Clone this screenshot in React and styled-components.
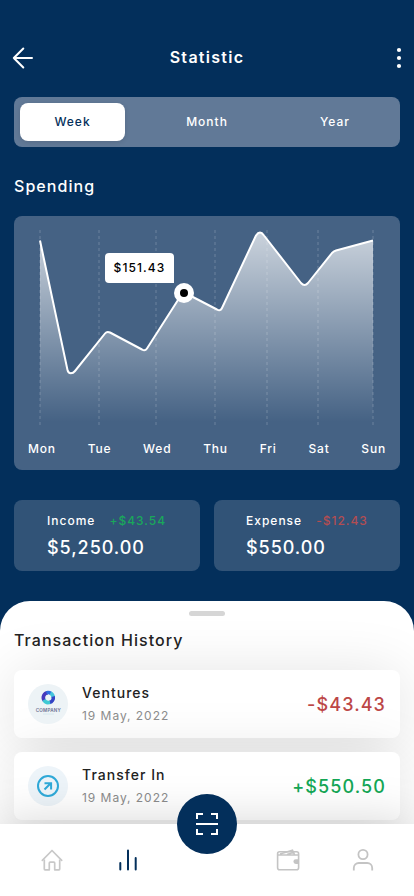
import React from "react";
import styled, { createGlobalStyle } from "styled-components";

const GlobalStyle = createGlobalStyle`
  * {
    box-sizing: border-box;
  }

  body {
    margin: 0;
    background: #032f5b;
    font-family: Inter, "Liberation Sans", sans-serif;
  }
`;

const Screen = styled.div`
  display: flex;
  flex-direction: column;
  width: 414px;
  height: 896px;
  overflow: hidden;
  background: #032f5b;
  color: #fff;
`;

const Header = styled.header`
  display: flex;
  align-items: center;
  justify-content: space-between;
  height: 97px;
  padding: 19px 12px 0;
`;

const HeaderTitle = styled.h1`
  margin: 0 0 2px;
  font-size: 16px;
  font-weight: 600;
  line-height: 20px;
  letter-spacing: 1.28px;
`;

const IconButton = styled.button`
  display: flex;
  justify-content: ${({ $end }) => ($end ? "flex-end" : "flex-start")};
  width: 24px;
  padding: 0;
  border: none;
  background: none;
`;

const Segments = styled.div`
  display: grid;
  grid-template-columns: 105px 164px 92px;
  flex-shrink: 0;
  height: 50px;
  margin: 0 14px;
  padding: 6px;
  border-radius: 8px;
  background: #617997;
`;

const Segment = styled.button`
  padding: 0 0 2px;
  border: none;
  border-radius: 8px;
  background: ${({ $active }) => ($active ? "#fff" : "transparent")};
  box-shadow: ${({ $active }) =>
    $active ? "0 1px 5px rgba(0, 0, 0, 0.12)" : "none"};
  color: ${({ $active }) => ($active ? "#032f5b" : "#fff")};
  font-family: inherit;
  font-size: 12px;
  font-weight: 500;
  letter-spacing: 1px;
`;

const SectionTitle = styled.h2`
  margin: ${({ $margin }) => $margin};
  color: ${({ $dark }) => ($dark ? "#222" : "#fff")};
  font-size: 16px;
  font-weight: 500;
  line-height: 20px;
  letter-spacing: 1.05px;
`;

const ChartCard = styled.section`
  position: relative;
  display: flex;
  flex-direction: column;
  flex-shrink: 0;
  height: 254px;
  margin: 0 14px;
  border-radius: 8px;
  background: #456284;
`;

const Days = styled.div`
  display: flex;
  justify-content: space-between;
  padding: 9px 14px 0;
  font-size: 12px;
  font-weight: 500;
  line-height: 16px;
  letter-spacing: 0.8px;
`;

const Tooltip = styled.div`
  position: absolute;
  top: 37px;
  left: 91px;
  width: 69px;
  height: 30px;
  border-radius: 4px 4px 0 4px;
  background: #fff;
  color: #000;
  font-size: 12px;
  font-weight: 500;
  line-height: 30px;
  letter-spacing: 1.1px;
  text-align: center;
`;

const Summary = styled.div`
  display: grid;
  grid-template-columns: 1fr 1fr;
  gap: 14px;
  flex-shrink: 0;
  height: 71px;
  margin: 30px 14px;
`;

const SummaryCard = styled.div`
  padding: 13px 0 0 ${({ $indent }) => $indent}px;
  border-radius: 8px;
  background: #315377;
`;

const SummaryTop = styled.div`
  display: flex;
  gap: 14px;
  font-size: 12px;
  font-weight: 500;
  line-height: 16px;
  letter-spacing: 1px;
`;

const Change = styled.span`
  color: ${({ $positive }) => ($positive ? "#1aa75b" : "#b34d52")};
`;

const SummaryAmount = styled.div`
  margin-top: 8px;
  font-size: 18px;
  font-weight: 500;
  line-height: 22px;
  letter-spacing: 0.95px;
`;

const Sheet = styled.section`
  flex-shrink: 0;
  height: 223px;
  overflow: hidden;
  border-radius: 30px 30px 0 0;
  background: #fff;
`;

const Handle = styled.div`
  width: 36px;
  height: 5px;
  margin: 10px auto 0;
  border-radius: 3px;
  background: #d6d6d6;
`;

const Transaction = styled.div`
  display: flex;
  align-items: center;
  height: 68px;
  margin: 0 14px 14px;
  padding: 0 14px;
  border-radius: 8px;
  background: #fff;
  box-shadow: 0 4px 60px rgba(0, 0, 0, 0.12);
`;

const Avatar = styled.div`
  display: flex;
  align-items: center;
  justify-content: center;
  width: 40px;
  height: 40px;
  border-radius: 50%;
  background: ${({ $color }) => $color};
`;

const Details = styled.div`
  flex: 1;
  margin-left: 14px;
`;

const Name = styled.div`
  color: #222;
  font-size: 14px;
  font-weight: 500;
  line-height: 20px;
  letter-spacing: 1.03px;
`;

const DateLabel = styled.div`
  margin-top: 4px;
  color: #8c8c8c;
  font-size: 12px;
  line-height: 18px;
  letter-spacing: 0.96px;
`;

const Amount = styled.div`
  color: ${({ $positive }) => ($positive ? "#14a756" : "#bc4747")};
  font-size: 18px;
  font-weight: 500;
  letter-spacing: 1.1px;
`;

const Nav = styled.nav`
  position: relative;
  display: flex;
  flex-shrink: 0;
  height: 72px;
  padding: 24px 0 0 38px;
  background: #fff;
  box-shadow: 0 0 50px rgba(0, 0, 0, 0.18);
`;

const NavItem = styled.a`
  display: flex;
  justify-content: center;
  width: 28px;
  margin-left: ${({ $gap = 0 }) => $gap}px;
`;

const ScanButton = styled.button`
  position: absolute;
  top: -30px;
  left: 177px;
  display: flex;
  align-items: center;
  justify-content: center;
  width: 60px;
  height: 60px;
  padding: 0;
  border: none;
  border-radius: 50%;
  background: #032f5b;
`;

const days = ["Mon", "Tue", "Wed", "Thu", "Fri", "Sat", "Sun"];
const gridLines = [26, 85, 142, 201, 253, 304, 359];

const linePath =
  "M26 24.500 L53.500 154 Q54.200 157.200 56.800 157.200 Q59.200 157.200 61 155 L91 117.500 Q93 115 96 116.500 L128 133.500 Q131 135.500 133 132.500 L164 84 Q168 77 175 79 L203 93.500 Q206.500 95.500 208 92 L242 19.500 Q246 13.500 250 19.500 L287 67 Q290.500 71 294 67 L318 37 Q320 35 322 34.500 L359 24.500";

function SpendingChart() {
  return (
    <svg width="386" height="216" viewBox="0 0 386 216" fill="none">
      <defs>
        <linearGradient id="area" x1="0" y1="16" x2="0" y2="206" gradientUnits="userSpaceOnUse">
          <stop stopColor="#fff" stopOpacity="0.72" />
          <stop offset="1" stopColor="#fff" stopOpacity="0" />
        </linearGradient>
      </defs>
      <path d={`${linePath} V206 H26 Z`} fill="url(#area)" />
      {gridLines.map((x) => (
        <path key={x} d={`M${x} 14V209`} stroke="#fff" strokeOpacity="0.14" strokeWidth="1.5" strokeDasharray="3 3" />
      ))}
      <path d={linePath} stroke="#fff" strokeWidth="2" strokeLinejoin="round" />
      <circle cx="170" cy="77" r="10" fill="#fff" />
      <circle cx="170" cy="77" r="4" fill="#000" />
    </svg>
  );
}

function CompanyLogo() {
  return (
    <svg width="40" height="40" viewBox="0 0 40 40" fill="none">
      <path d="M16.300 16.500a5 5 0 0 1 3.500-7.900" stroke="#4639bd" strokeWidth="3.600" />
      <path d="M18.500 8.900a5 5 0 0 1 4.500 0.500" stroke="#2f6fe0" strokeWidth="3.600" />
      <path d="M22.500 9.100a5 5 0 0 1 2.700 4.400" stroke="#45c4dc" strokeWidth="3.600" />
      <path d="M25.200 12.500a5 5 0 0 1-3.700 5.900" stroke="#3443c4" strokeWidth="3.600" />
      <path d="M16 15.800a5 5 0 0 0 6 2.400" stroke="#3fc9d4" strokeWidth="3.600" />
      <text x="20.200" y="27.800" textAnchor="middle" fill="#6a6f90" fontSize="4.600" fontWeight="600" textLength="25">
        COMPANY
      </text>
      <path d="M15 30H26" stroke="#d6e8ee" strokeWidth="1" />
    </svg>
  );
}

function TransferIcon() {
  return (
    <svg width="24" height="24" viewBox="0 0 24 24" fill="none" stroke="#2fa9d8" strokeWidth="2">
      <circle cx="12" cy="12" r="10" />
      <path d="M8.500 15.500 L15 9 M8.500 9.200h6.600V15.500" />
    </svg>
  );
}

function HomeIcon() {
  return (
    <svg width="24" height="24" viewBox="0 0 24 24" fill="none" stroke="#c8c8c8" strokeWidth="1.700" strokeLinejoin="round">
      <path d="M2.300 12.300 L12 2.500 L21.700 12.300" strokeLinecap="round" />
      <path d="M4.300 11.500V21Q4.300 21.800 5 21.800H9.300V15Q9.300 14.200 10.200 14.200H13.800Q14.700 14.200 14.700 15V21.800H19Q19.700 21.800 19.700 21V11.500" />
    </svg>
  );
}

function StatsIcon() {
  return (
    <svg width="24" height="24" viewBox="0 0 24 24" stroke="#032f5b" strokeWidth="2" strokeLinecap="round">
      <path d="M4.300 15V21.500 M12 2.500V21.500 M19.700 10V21.500" />
    </svg>
  );
}

function WalletIcon() {
  return (
    <svg width="24" height="24" viewBox="0 0 24 24" fill="none" stroke="#c4c4c4" strokeWidth="1.600">
      <rect x="1.600" y="3.800" width="21" height="18" rx="2" />
      <path d="M2 7H22 M4 6L16.500 2.300L18.500 6.500 M11 6.500L18.500 4" />
      <path d="M22 12h-2.200a1.600 1.600 0 0 0 0 3.200h2.200z" fill="#c4c4c4" />
    </svg>
  );
}

function UserIcon() {
  return (
    <svg width="24" height="24" viewBox="0 0 24 24" fill="none" stroke="#c4c4c4" strokeWidth="1.800">
      <circle cx="12" cy="6.500" r="4.600" />
      <path d="M2.800 22.500V20a5 5 0 0 1 5-5h8.400a5 5 0 0 1 5 5v2.500" />
    </svg>
  );
}

function App() {
  return (
    <>
      <GlobalStyle />
      <Screen>
        <Header>
          <IconButton aria-label="Back">
            <svg width="22" height="22" viewBox="0 0 22 22" fill="none" stroke="#fff" strokeWidth="2">
              <path d="M11.300 1.500L1.800 11L11.300 20.500M1.800 11H20" strokeLinecap="round" strokeLinejoin="round" />
            </svg>
          </IconButton>
          <HeaderTitle>Statistic</HeaderTitle>
          <IconButton $end aria-label="More">
            <svg width="6" height="22" viewBox="0 0 6 22" fill="#fff">
              <circle cx="3" cy="3" r="2.100" />
              <circle cx="3" cy="11" r="2.100" />
              <circle cx="3" cy="19" r="2.100" />
            </svg>
          </IconButton>
        </Header>

        <Segments>
          <Segment $active>Week</Segment>
          <Segment>Month</Segment>
          <Segment>Year</Segment>
        </Segments>

        <SectionTitle $margin="29px 14px 20px">Spending</SectionTitle>
        <ChartCard>
          <SpendingChart />
          <Tooltip>$151.43</Tooltip>
          <Days>
            {days.map((day) => (
              <span key={day}>{day}</span>
            ))}
          </Days>
        </ChartCard>

        <Summary>
          <SummaryCard $indent={33}>
            <SummaryTop>
              <span>Income</span>
              <Change $positive>+$43.54</Change>
            </SummaryTop>
            <SummaryAmount>$5,250.00</SummaryAmount>
          </SummaryCard>
          <SummaryCard $indent={32}>
            <SummaryTop>
              <span>Expense</span>
              <Change>-$12.43</Change>
            </SummaryTop>
            <SummaryAmount>$550.00</SummaryAmount>
          </SummaryCard>
        </Summary>

        <Sheet>
          <Handle />
          <SectionTitle $dark $margin="14px 14px 20px">
            Transaction History
          </SectionTitle>
          <Transaction>
            <Avatar $color="#edf3f6">
              <CompanyLogo />
            </Avatar>
            <Details>
              <Name>Ventures</Name>
              <DateLabel>19 May, 2022</DateLabel>
            </Details>
            <Amount>-$43.43</Amount>
          </Transaction>
          <Transaction>
            <Avatar $color="#edf4f9">
              <TransferIcon />
            </Avatar>
            <Details>
              <Name>Transfer In</Name>
              <DateLabel>19 May, 2022</DateLabel>
            </Details>
            <Amount $positive>+$550.50</Amount>
          </Transaction>
        </Sheet>

        <Nav>
          <NavItem>
            <HomeIcon />
          </NavItem>
          <NavItem $gap={48}>
            <StatsIcon />
          </NavItem>
          <NavItem $gap={132}>
            <WalletIcon />
          </NavItem>
          <NavItem $gap={47}>
            <UserIcon />
          </NavItem>
          <ScanButton aria-label="Scan">
            <svg width="22" height="22" viewBox="0 0 22 22" fill="none" stroke="#fff" strokeWidth="2">
              <path d="M1 6V1H7 M15 1H21V6 M1 16V21H7 M15 21H21V16 M0 11H22" />
            </svg>
          </ScanButton>
        </Nav>
      </Screen>
    </>
  );
}

export default App;
